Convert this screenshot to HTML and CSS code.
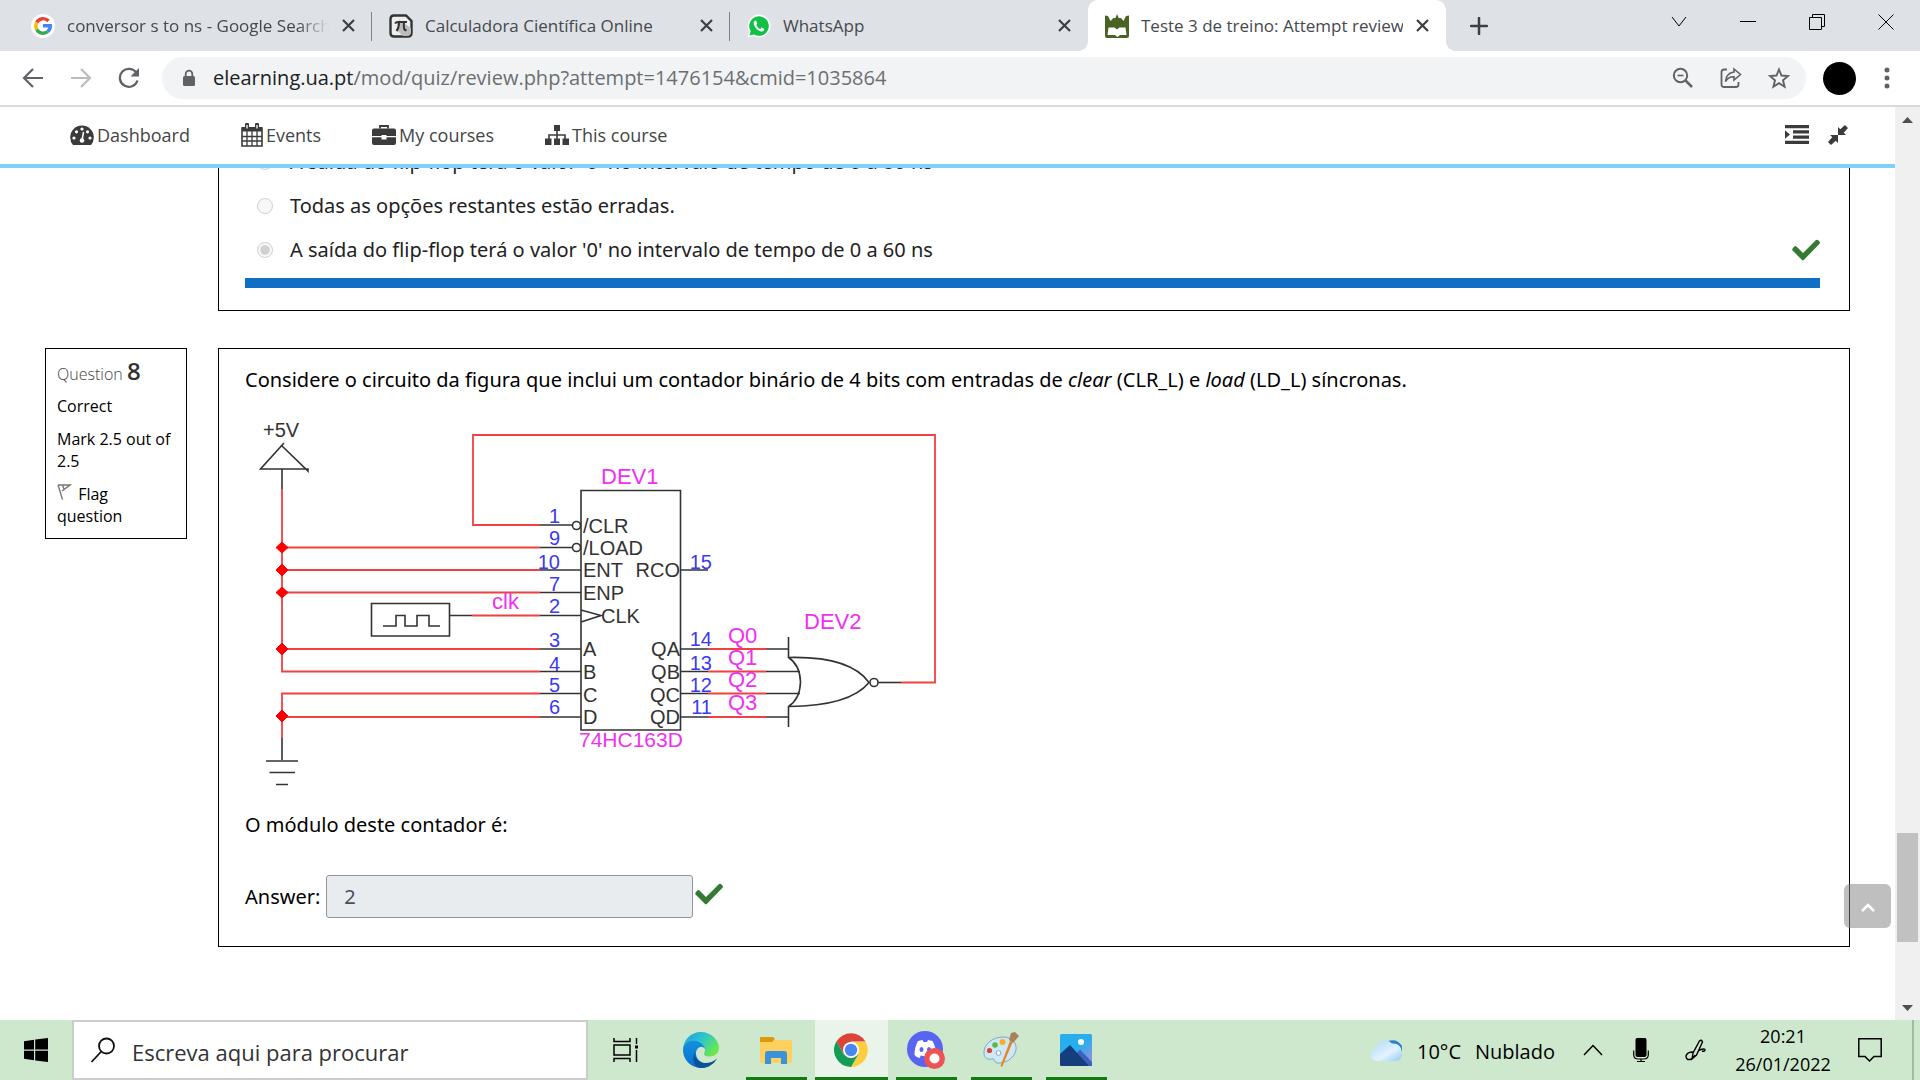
FILE: index.html
```html
<!DOCTYPE html>
<html lang="pt">
<head>
<meta charset="utf-8">
<title>Teste 3 de treino: Attempt review</title>
<link rel="stylesheet" href="styles.css">
</head>
<body>
<svg class="defs" width="0" height="0" aria-hidden="true">
  <symbol id="x" viewBox="0 0 13 13"><path d="M1 1L12 12M12 1L1 12" stroke="#3c4043" stroke-width="2.2" fill="none"/></symbol>
  <symbol id="check" viewBox="0 0 28 22"><path d="M4.500 7.500L11 14L23.500 1.500Q25 0 26.500 1.500L27.300 2.300Q28.500 3.700 27.300 5L12 20.800Q10.900 21.900 9.800 20.800L.8 11.800Q-.4 10.500.8 9.200L2.300 7.600Q3.400 6.500 4.500 7.500Z" fill="#357a32"/></symbol>
</svg>

<header class="tabs">
  <div class="tab">
    <svg class="fav" viewBox="0 0 24 24"><circle cx="12" cy="12" r="12" fill="#fff"/><g fill="none" stroke-width="3.400"><path d="M17.500 7A7.300 7.300 0 0 0 5.700 8.500" stroke="#ea4335"/><path d="M5.700 8.500A7.300 7.300 0 0 0 5.700 15.500" stroke="#fbbc05"/><path d="M5.700 15.500A7.300 7.300 0 0 0 16.800 17.500" stroke="#34a853"/><path d="M16.800 17.500Q19.500 15 19.300 11.800H12" stroke="#4285f4"/></g></svg>
    <span class="tab-title fade">conversor s to ns - Google Search</span>
    <button class="tab-close" aria-label="Close tab"><svg width="13" height="13"><use href="#x"/></svg></button>
  </div>
  <div class="tab">
    <svg class="fav" viewBox="0 0 24 24"><path d="M5 1.500H17L22.500 7V19Q22.500 22.500 19 22.500H5Q1.500 22.500 1.500 19V5Q1.500 1.500 5 1.500Z" fill="#eee" stroke="#333" stroke-width="2.400"/><path d="M10 6L22 14V18Q22 22 18 22H14L8 16Z" fill="#bbb"/><path d="M6 9.500Q7 8 9 8H18M10 8.500Q10 14 7.500 17M15 8.500Q14 17 17.500 16" stroke="#333" stroke-width="2" fill="none"/></svg>
    <span class="tab-title">Calculadora Científica Online</span>
    <button class="tab-close" aria-label="Close tab"><svg width="13" height="13"><use href="#x"/></svg></button>
  </div>
  <div class="tab">
    <svg class="fav" viewBox="0 0 24 24"><path d="M.5 23.500L2 17.500A11.500 11.500 0 1 1 6.500 22Z" fill="#fff"/><path d="M2.500 21.500L3.700 17.300A9.800 9.800 0 1 1 7 20.500Z" fill="#12c045"/><path d="M8 6.500Q6 8 7 11Q9 16 14 17.500Q17 18 17.500 15L14.700 13.500L13.300 15Q10.500 14 9.200 11L10.300 9.700L9.200 6.800Q8.800 6.200 8 6.500Z" fill="#fff"/></svg>
    <span class="tab-title">WhatsApp</span>
    <button class="tab-close" aria-label="Close tab"><svg width="13" height="13"><use href="#x"/></svg></button>
  </div>
  <div class="tab active">
    <svg class="fav" viewBox="0 0 24 24"><path d="M0 1.500L3 2L5.500 7L8.500 4L10.500 4L12 0L13.700 4L16 4L18.500 7L21 2L24 1.500V22Q24 24 22 24H2Q0 24 0 22Z" fill="#4a6322"/><path d="M3.500 13.500H9.500L12 15.500L14.500 13.500H20.500L21.500 21H15L12.500 23L10 21H2.500Z" fill="#fff"/></svg>
    <span class="tab-title">Teste 3 de treino: Attempt review</span>
    <button class="tab-close" aria-label="Close tab"><svg width="13" height="13"><use href="#x"/></svg></button>
  </div>
  <button class="new-tab" aria-label="New tab"><svg width="18" height="18" viewBox="0 0 18 18"><path d="M9 1V17M1 9H17" stroke="#3c4043" stroke-width="2.500" stroke-linecap="round"/></svg></button>
  <div class="window-buttons">
    <button aria-label="Search tabs"><svg width="16" height="16" viewBox="0 0 16 16"><path d="M1 3L8 12L15 3"/></svg></button>
    <button aria-label="Minimize"><svg width="16" height="16" viewBox="0 0 16 16"><path d="M0 7.500H16"/></svg></button>
    <button aria-label="Restore"><svg width="16" height="16" viewBox="0 0 16 16"><path d="M.5 3.500H12.500V15.500H.5ZM3.500 3.500V.5H15.500V12.500H12.500"/></svg></button>
    <button aria-label="Close"><svg width="16" height="16" viewBox="0 0 16 16"><path d="M.5.500L15.500 15.500M15.500.500L.5 15.500"/></svg></button>
  </div>
</header>

<div class="toolbar">
  <button aria-label="Back"><svg width="22" height="22" viewBox="0 0 22 22"><path d="M21 11H2.500M11 2L2 11L11 20" stroke="#5f6368" stroke-width="2.200" fill="none"/></svg></button>
  <button aria-label="Forward"><svg width="22" height="22" viewBox="0 0 22 22"><path d="M1 11H19.500M11 2L20 11L11 20" stroke="#babcbe" stroke-width="2.200" fill="none"/></svg></button>
  <button aria-label="Reload"><svg width="22" height="22" viewBox="0 0 22 22"><path d="M18.500 6A9 9 0 1 0 19.500 13.500" stroke="#5f6368" stroke-width="2.300" fill="none"/><path d="M21 1V9.500H12.500Z" fill="#5f6368"/></svg></button>
  <div class="omnibox">
    <svg width="14" height="18" viewBox="0 0 14 18"><rect x="1" y="7" width="12" height="10" rx="1.500" fill="#5f6368"/><path d="M3.700 8V5A3.300 3.300 0 0 1 10.300 5V8" stroke="#5f6368" stroke-width="1.800" fill="none"/></svg>
    <span class="url"><b>elearning.ua.pt</b>/mod/quiz/review.php?attempt=1476154&amp;cmid=1035864</span>
    <button aria-label="Zoom"><svg width="22" height="22" viewBox="0 0 22 22"><g stroke="#5f6368" fill="none"><circle cx="8.500" cy="8.500" r="6.700" stroke-width="2"/><path d="M13.500 13.500L20 20" stroke-width="2.500"/><path d="M5.500 8.500H11.500" stroke-width="1.600"/></g></svg></button>
    <button aria-label="Share"><svg width="22" height="22" viewBox="0 0 22 22"><path d="M7 2.500H4Q1.500 2.500 1.500 5V17.500Q1.500 20 4 20H16Q18.500 20 18.500 17.500V15" stroke="#5f6368" stroke-width="1.800" fill="none"/><path d="M14 2L20.500 7.500L14 13V9.800Q8.500 9.500 5.500 14.500Q6 6 14 5Z" stroke="#5f6368" stroke-width="1.600" fill="none"/></svg></button>
    <button aria-label="Bookmark"><svg width="22" height="22" viewBox="0 0 22 22"><path d="M11 2.500L13.500 8.500L20 9L15 13.300L16.600 19.700L11 16.200L5.400 19.700L7 13.300L2 9L8.500 8.500Z" stroke="#5f6368" stroke-width="1.900" fill="none"/></svg></button>
  </div>
  <button class="avatar" aria-label="Profile"></button>
  <button class="kebab" aria-label="Menu"><svg width="6" height="22" viewBox="0 0 6 22"><g fill="#5f6368"><circle cx="3" cy="3" r="2.500"/><circle cx="3" cy="11" r="2.500"/><circle cx="3" cy="19" r="2.500"/></g></svg></button>
</div>

<div class="view">
  <div class="page">
    <nav class="nav">
      <a href="#"><svg width="24" height="20" viewBox="0 0 24 20"><path d="M3 20A11.800 11.800 0 1 1 21 20Z" fill="#3b3b3b"/><g fill="#fff"><circle cx="4" cy="13" r="1.600"/><circle cx="6.500" cy="6.800" r="1.600"/><circle cx="12" cy="4" r="1.600"/><circle cx="17.500" cy="6.800" r="1.600"/><circle cx="20" cy="13" r="1.600"/><circle cx="12" cy="15.500" r="2.300"/></g><path d="M12 15.500L13.500 7" stroke="#fff" stroke-width="1.500"/></svg>Dashboard</a>
      <a href="#"><svg width="22" height="24" viewBox="0 0 22 24"><path d="M1 5H21V23H1Z" fill="#fff" stroke="#3b3b3b" stroke-width="1.600"/><path d="M1 4H21V8.500H1Z" fill="#3b3b3b"/><path d="M6 8V23M11 8V23M16 8V23M1 13.500H21M1 18H21" stroke="#3b3b3b" stroke-width="1.300"/><path d="M6 1.500V6M16 1.500V6" stroke="#3b3b3b" stroke-width="4" stroke-linecap="round"/><path d="M6 2V5.500M16 2V5.500" stroke="#fff" stroke-width="1.300"/></svg>Events</a>
      <a href="#"><svg width="24" height="20" viewBox="0 0 24 20"><path d="M8 3.500V1H16V3.500" stroke="#3b3b3b" stroke-width="1.800" fill="none"/><path d="M2 3.500H22Q24 3.500 24 5.500V11H14.500V10H9.500V11H0V5.500Q0 3.500 2 3.500ZM0 12.300H9.500V14.500H14.500V12.300H24V18Q24 20 22 20H2Q0 20 0 18Z" fill="#3b3b3b"/></svg>My courses</a>
      <a href="#"><svg width="24" height="20" viewBox="0 0 24 20"><path d="M9 0H15V6H12.800V9.200H20.800V13.500H24V20H17.500V13.500H19.200V10.800H12.800V13.500H15V20H9V13.500H11.200V10.800H4.800V13.500H6.500V20H0V13.500H3.200V9.200H11.200V6H9Z" fill="#3b3b3b"/></svg>This course</a>
      <span class="nav-tools">
        <button aria-label="Toggle blocks"><svg width="24" height="20" viewBox="0 0 24 20"><path d="M0 0H24V3.300H0ZM8 5.300H24V8.600H8ZM8 10.500H24V13.800H8ZM0 15.700H24V19H0ZM0 5.300L5 9.500L0 13.800Z" fill="#3b3b3b"/></svg></button>
        <button aria-label="Exit full width"><svg width="20" height="20" viewBox="0 0 20 20"><path d="M10 2L12.300 4.300L17 0L20 3L15.700 7.700L18 10H10ZM10 10V18L7.700 15.700L3 20L0 17L4.300 12.300L2 10Z" fill="#3b3b3b"/></svg></button>
      </span>
    </nav>
    <main class="content">
      <section class="question previous">
        <div class="box">
          <label class="option"><input type="radio" name="q7" disabled>A saída do flip-flop terá o valor '0' no intervalo de tempo de 0 a 80 ns</label>
          <label class="option"><input type="radio" name="q7" disabled>Todas as opções restantes estão erradas.</label>
          <label class="option"><input type="radio" name="q7" disabled checked>A saída do flip-flop terá o valor '0' no intervalo de tempo de 0 a 60 ns<svg class="mark" width="28" height="22"><use href="#check"/></svg></label>
          <div class="bar"></div>
        </div>
      </section>
      <section class="question">
        <aside class="info">
          <h3>Question <b>8</b></h3>
          <p>Correct</p>
          <p>Mark 2.5 out of 2.5</p>
          <a href="#"><svg width="15" height="16" viewBox="0 0 15 16"><path d="M1 1L5.500 15.500M1 1H13L5 7M5.500 1L7 5" stroke="#777" stroke-width="1.400" fill="none"/></svg> Flag question</a>
        </aside>
        <div class="box">
          <p>Considere o circuito da figura que inclui um contador binário de 4 bits com entradas de <i>clear</i> (CLR_L) e <i>load</i> (LD_L) síncronas.</p>
          <svg class="circuit" width="700" height="400" viewBox="245 400 700 400" role="img" aria-label="Circuito">
            <g fill="none" stroke="#f04040" stroke-width="1.800">
              <path d="M282 489V671.500H540M282 547.500H540M282 570H540M282 592.500H540M282 649H540M540 693.500H282V738M282 717H540M540 525H473V435H935V682.500H901M472 615.500H540M708 649H766M708 671.500H766M708 693.500H766M708 717H766"/>
            </g>
            <g fill="none" stroke="#333" stroke-width="1.600">
              <path d="M284 443L260.500 469H308L308 471L281 445M282 469V489M282 738V760M266 761H298M269.500 772.500H295M276 784.500H288"/>
              <path d="M371.500 603.500H449.500V636H371.500ZM383 626H396V615.500H405V626H417V615.500H429V626H440M449.500 615.500H472"/>
              <path d="M540 525H572M540 547.500H572M540 570H581M540 592.500H581M540 615.500H581M540 649H581M540 671.500H581M540 693.500H581M540 717H581"/>
              <circle cx="576.500" cy="525.500" r="4"/><circle cx="576.500" cy="547.500" r="4"/>
              <path d="M581 490.500H680.500V730H581ZM581 610L601 615.500L581 622"/>
              <path d="M680.500 570H708M680.500 649H708M680.500 671.500H708M680.500 693.500H708M680.500 717H708M766 649H788.500M766 671.500H800M766 693.500H800M766 717H788.500M788.500 637V658M788.500 706V727"/>
              <path d="M788.500 657.500Q800 665 800.500 682Q800 699 788.500 706.500M788.500 657.500Q850 656 869 682.500Q850 706 788.500 706.500"/>
              <circle cx="874" cy="682.500" r="4"/><path d="M878 682.500H901"/>
            </g>
            <g fill="#f00"><path d="M282 542L288 547.500L282 553L276 547.500ZM282 564L288 570L282 576L276 570ZM282 587L288 592.500L282 598L276 592.500ZM282 643L288 649L282 655L276 649ZM282 710L288 716L282 722L276 716Z" stroke="#f00"/></g>
            <g class="part"><text x="263" y="437">+5V</text><text x="583" y="533">/CLR</text><text x="583" y="555">/LOAD</text><text x="583" y="577">ENT</text><text x="583" y="600">ENP</text><text x="601" y="623">CLK</text><text x="583" y="656">A</text><text x="583" y="679">B</text><text x="583" y="702">C</text><text x="583" y="724">D</text></g>
            <g class="part end"><text x="680" y="577">RCO</text><text x="680" y="656">QA</text><text x="680" y="679">QB</text><text x="680" y="702">QC</text><text x="680" y="724">QD</text></g>
            <g class="pin end"><text x="560" y="523">1</text><text x="560" y="545">9</text><text x="560" y="569">10</text><text x="560" y="591">7</text><text x="560" y="613">2</text><text x="560" y="647">3</text><text x="560" y="671">4</text><text x="560" y="692">5</text><text x="560" y="714">6</text><text x="712" y="569">15</text><text x="712" y="646">14</text><text x="712" y="670">13</text><text x="712" y="692">12</text><text x="712" y="714">11</text></g>
            <g class="net"><text x="492" y="609">clk</text><text x="601" y="484">DEV1</text><text x="804" y="629">DEV2</text><text class="model" x="579" y="747">74HC163D</text><text x="728" y="643">Q0</text><text x="728" y="665">Q1</text><text x="728" y="687">Q2</text><text x="728" y="710">Q3</text></g>
          </svg>
          <p class="ask">O módulo deste contador é:</p>
          <div class="answer"><label for="answer">Answer:</label><input id="answer" type="text" value="2" readonly><svg width="28" height="22"><use href="#check"/></svg></div>
        </div>
      </section>
      <button class="to-top" aria-label="Back to top"><svg width="14" height="9" viewBox="0 0 14 9"><path d="M1 8L7 2L13 8" stroke="#fff" stroke-width="2.500" fill="none"/></svg></button>
    </main>
  </div>
  <div class="scrollbar">
    <svg width="11" height="6" viewBox="0 0 11 6"><path d="M0 6L5.500 0L11 6Z" fill="#505050"/></svg>
    <div class="track"><div class="thumb"></div></div>
    <svg width="11" height="6" viewBox="0 0 11 6"><path d="M0 0L5.500 6L11 0Z" fill="#505050"/></svg>
  </div>
</div>

<footer class="taskbar">
  <button class="start" aria-label="Start"><svg width="24" height="24" viewBox="0 0 24 24"><path d="M0 3.300L10 1.800V11.500H0ZM11.200 1.600L24 0V11.500H11.200ZM0 12.700H10V22.300L0 20.800ZM11.200 12.700H24V24L11.200 22.500Z"/></svg></button>
  <label class="search"><svg width="26" height="26" viewBox="0 0 26 26"><circle cx="16.500" cy="9" r="7.500" fill="none" stroke="#111" stroke-width="1.800"/><path d="M11.300 14.500L1.500 25" stroke="#111" stroke-width="1.800"/></svg><input type="text" placeholder="Escreva aqui para procurar" aria-label="Search"></label>
  <div class="apps">
    <button aria-label="Task view"><svg width="26" height="24" viewBox="0 0 26 24"><path d="M1 0V3.500H17V0M1 7H17V17H1ZM1 24V20.500H17V24M23.500 0V6M23.500 12V24" stroke="#000" stroke-width="1.500" fill="none"/><path d="M22 7.500H25V10.500H22Z"/></svg></button>
    <button aria-label="Edge"><svg width="36" height="36" viewBox="0 0 36 36"><defs><linearGradient id="e1" x1="0" y1="0" x2="1" y2=".6"><stop offset="0" stop-color="#1b9de2"/><stop offset=".5" stop-color="#2cc3d0"/><stop offset="1" stop-color="#6be84c"/></linearGradient><linearGradient id="e2" x1="0" y1="0" x2="0" y2="1"><stop offset="0" stop-color="#1490dc"/><stop offset="1" stop-color="#0a6fd0"/></linearGradient></defs><path d="M0 18C0 8 8 0 18 0S36 8 36 16C36 22 31 24.500 26 24.500C22 24.500 20 22.500 21.500 20.500C23.500 17 20 13 15 12Q4 9 0 18Z" fill="url(#e1)"/><path d="M0 18C1 10 9 7 16 10Q21 12.500 22 17C19 12.500 14 15 13 20C12 28 20 32 27 33.500A18 18 0 0 1 0 18Z" fill="url(#e2)"/><path d="M13 19C10 25 15 31 22 31Q29 31 34 26.500C30 34 21 38 14 35Q7 28 13 19Z" fill="#0f4f96"/></svg></button>
    <button class="open" aria-label="Explorer"><svg width="32" height="28" viewBox="0 0 32 28"><path d="M0 2Q0 1 1 1H13L15 4H31Q32 4 32 5V25Q32 27 30 27H2Q0 27 0 25Z" fill="#fdd060"/><path d="M0 5V2Q0 1 1 1H13L15 3L12 6H0Z" fill="#dd9b0c"/><path d="M5 28V18Q5 15 8 15H24Q27 15 27 18V28H21V22H11V28Z" fill="#3a93da"/></svg></button>
    <button class="open current" aria-label="Chrome"><svg width="34" height="34" viewBox="0 0 34 34"><path d="M2.500 8.500A17 17 0 0 1 31.500 8.500H17L9.700 21Z" fill="#db4437"/><path d="M31.800 9A17 17 0 0 1 17 34L24.300 21.200L17 9Z" fill="#ffcd40"/><path d="M2.500 8.300A17 17 0 0 0 17 34L24.300 21.200H9.700Z" fill="#149c57"/><circle cx="17" cy="17" r="8" fill="#fff"/><circle cx="17" cy="17" r="6.200" fill="#4a86f0"/></svg></button>
    <button class="open" aria-label="Discord"><svg class="wide" width="38" height="38" viewBox="0 0 38 38"><circle cx="18" cy="18" r="18" fill="#5865f2"/><path d="M11 10L15.500 9L16.500 11H20L21 9L25.500 10Q29 16 29 24Q27 26.500 24 27L22.500 24.500Q18 26 14 24.500L12.500 27Q9.500 26.500 7.500 24Q7.500 16 11 10Z" fill="#fff"/><ellipse cx="14.500" cy="18.500" rx="2" ry="2.500" fill="#5865f2"/><ellipse cx="22" cy="18.500" rx="2" ry="2.500" fill="#5865f2"/><circle cx="27.500" cy="27.500" r="10.500" fill="#ee5253"/><circle cx="27.500" cy="27.500" r="5" fill="#fff"/></svg></button>
    <button class="open" aria-label="Paint"><svg width="36" height="36" viewBox="0 0 36 36"><path d="M1 22C0 12 10 5 20 5C29 5 34 11 33 18C31 27 22 31 16 31C10 32 13 26 9 27C5 28 1.500 26 1 22Z" fill="#cfe8f6" stroke="#7ba9c6"/><circle cx="6.500" cy="18.500" r="2.600" fill="#e04030"/><circle cx="12" cy="13" r="2.800" fill="#59b948"/><circle cx="19.500" cy="10" r="3" fill="#fbb01e"/><circle cx="15.500" cy="21" r="2.400" fill="#fff" stroke="#7ba9c6"/><path d="M27 9L29.500 10.500L19 35L17.500 34Z" fill="#e58222"/><path d="M26 8L28 1L32 0L36 4L30 11Z" fill="#a9805a"/></svg></button>
    <button class="open" aria-label="Photos"><svg width="32" height="32" viewBox="0 0 32 32"><defs><linearGradient id="p1" x1="0" y1="0" x2="1" y2="1"><stop offset=".5" stop-color="#27aeec"/><stop offset="1" stop-color="#a98bdc"/></linearGradient></defs><rect width="32" height="32" rx="1.500" fill="url(#p1)"/><path d="M14 22L20 15.500L32 28V32H14Z" fill="#3d62be"/><path d="M0 20L10 11L29 32H1.500Q0 32 0 30.500Z" fill="#153f7c"/><circle cx="21" cy="8" r="3" fill="#fff"/></svg></button>
  </div>
  <div class="tray">
    <button class="weather"><svg width="32" height="24" viewBox="0 0 32 24"><defs><linearGradient id="c1" x1="0" y1="0" x2="1" y2="1"><stop offset="0" stop-color="#aed8fb"/><stop offset=".6" stop-color="#e3f3ff"/><stop offset="1" stop-color="#8fc6f5"/></linearGradient></defs><path d="M17 3Q26 0 31 8V14H20Z" fill="#2f80cc"/><path d="M7 23A6.500 6.500 0 0 1 5.500 10A9 9 0 0 1 21 5.500Q30 5 31 14Q31.500 23 24 23Z" fill="url(#c1)"/></svg><span>10°C</span><span>Nublado</span></button>
    <button class="chevron" aria-label="Hidden icons"><svg width="20" height="12" viewBox="0 0 20 12"><path d="M1 11L10 1.500L19 11" stroke="#000" stroke-width="1.500" fill="none"/></svg></button>
    <button class="mic" aria-label="Microphone"><svg width="16" height="24" viewBox="0 0 16 24"><path d="M4 0H12Q13.500 0 13.500 2V17Q13.500 19 11.500 19H4.500Q2.500 19 2.500 17V2Q2.500 0 4 0Z"/><path d="M.7 12.500V17Q1 21 5 21H11Q15 21 15.300 17V12.500M8 21V23.500M4 23.500H12" stroke="#000" stroke-width="1.200" fill="none"/></svg></button>
    <button class="pen" aria-label="Pen"><svg width="21" height="22" viewBox="0 0 21 22"><path d="M7 20L8 14L14.500 2Q16.500 0 17.500 3L11.500 16ZM8 13Q2 13 1 17Q1 21 5 20.500Q8 20 10 16M13 12Q18 9 20 10.500Q20 13 17 12" stroke="#000" stroke-width="1.400" fill="none"/></svg></button>
    <button class="clock"><span>20:21</span><span>26/01/2022</span></button>
    <button class="notes" aria-label="Notifications"><svg width="24" height="24" viewBox="0 0 24 24"><path d="M.8.800H23.200V18.500H16L11.500 23L7 18.500H.8Z" stroke="#000" stroke-width="1.500" fill="none"/></svg></button>
    <span class="desktop"></span>
  </div>
</footer>
</body>
</html>
```
FILE: styles.css
```css
* { box-sizing: border-box; }
body {
  margin: 0;
  height: 100vh;
  display: flex;
  flex-direction: column;
  overflow: hidden;
  background: #fff;
  color: #000;
  font-family: "Open Sans", "Noto Sans", sans-serif;
  font-size: 20px;
  line-height: 30px;
}
button {
  border: 0;
  padding: 0;
  background: none;
  font: inherit;
  color: inherit;
  display: flex;
  align-items: center;
  justify-content: center;
}
svg { display: block; flex: none; }
.defs { position: absolute; }
p, h3 { margin: 0; }
a { color: inherit; text-decoration: none; }

/* Tab strip */
.tabs {
  display: flex;
  height: 51px;
  padding-left: 14px;
  background: #dee1e6;
  flex: none;
}
.tab {
  flex: 0 1 358px;
  min-width: 0;
  display: flex;
  align-items: center;
  padding: 0 17px;
  position: relative;
  font-size: 17px;
  color: #45494d;
}
.tab:nth-child(-n+2)::after {
  content: "";
  position: absolute;
  right: 0;
  top: 12px;
  height: 29px;
  width: 1px;
  background: #808387;
}
.tab.active { background: #fff; border-radius: 10px 10px 0 0; }
.tab.active::before, .tab.active::after {
  content: "";
  position: absolute;
  bottom: 0;
  width: 10px;
  height: 10px;
}
.tab.active::before { left: -10px; background: radial-gradient(circle at 0 0, #dee1e6 10px, #fff 10px); }
.tab.active::after { right: -10px; background: radial-gradient(circle at 100% 0, #dee1e6 10px, #fff 10px); }
.fav { width: 24px; height: 24px; }
.tab-title {
  flex: 1;
  margin: 0 13px 0 12px;
  white-space: nowrap;
  overflow: hidden;
}
.fade { mask-image: linear-gradient(to right, #000 88%, transparent); }
.new-tab { width: 66px; }
.window-buttons { margin-left: auto; display: flex; }
.window-buttons button { width: 69px; height: 44px; }
.window-buttons path { stroke: #000; fill: none; }

/* Address bar */
.toolbar {
  display: flex;
  align-items: center;
  height: 56px;
  padding: 0 24px 0 9px;
  border-bottom: 2px solid #d9dadc;
  flex: none;
}
.toolbar > button { width: 48px; height: 42px; }
.omnibox {
  flex: 1;
  display: flex;
  align-items: center;
  height: 42px;
  margin-left: 9px;
  padding: 0 16px 0 20px;
  border-radius: 21px;
  background: #f1f3f4;
}
.omnibox button { margin-left: 26px; }
.url { flex: 1; margin-left: 17px; color: #6b6f73; white-space: nowrap; }
.url b { font-weight: 400; color: #202124; }
.toolbar > .avatar { width: 33px; height: 33px; margin-left: 17px; border-radius: 50%; background: #000; }
.toolbar > .kebab { width: 6px; margin: 0 6px 0 28px; }

/* Page */
.view { flex: 1; min-height: 0; display: flex; }
.page { flex: 1; min-width: 0; display: flex; flex-direction: column; }
.nav {
  display: flex;
  align-items: center;
  gap: 51px;
  height: 61px;
  padding: 0 47px 2px 70px;
  border-bottom: 4px solid #7fd0ff;
  font-size: 18px;
  color: #454545;
  flex: none;
}
.nav a { display: flex; align-items: center; gap: 3px; }
.nav-tools { margin-left: auto; display: flex; gap: 19px; }
.content {
  flex: 1;
  min-height: 0;
  overflow: hidden;
  position: relative;
  padding: 0 45px;
}
.question { display: flex; align-items: flex-start; gap: 31px; margin-bottom: 37px; }
.question .box {
  flex: 1;
  border: 1px solid #000;
  padding: 16px 29px 28px 26px;
  font-family: "Noto Sans", "Open Sans", sans-serif;
}
.question.previous { margin-top: -49px; padding-left: 173px; }
.previous .box { padding-top: 20px; padding-bottom: 22px; }
.option { display: flex; align-items: center; height: 44px; color: #222; }
.option input { width: 16px; height: 16px; margin: 0 17px 0 12px; }
.mark { margin-left: auto; }
.bar { height: 10px; margin-top: 6px; background: #0f6fc5; }
.info {
  flex: none;
  width: 142px;
  height: 191px;
  border: 1px solid #000;
  padding: 6px 11px;
  font-size: 16px;
  line-height: 22px;
}
.info h3 { font-size: 16px; font-weight: 300; line-height: 32px; color: #444; }
.info h3 b { font-size: 24px; font-weight: 600; color: #333; }
.info p { margin: 5px 0 11px; }
.info svg { display: inline-block; margin-right: 2px; }
.circuit { margin-top: 5px; }
.circuit text { font-family: "Liberation Sans", Arial, sans-serif; font-size: 20px; }
.circuit .part { fill: #333; }
.circuit .pin { fill: #3a3af0; }
.circuit .net text { fill: #f030f0; font-size: 22px; }
.circuit .net .model { font-size: 21px; }
.circuit .end { text-anchor: end; }
.ask { margin-top: 10px; }
.answer { display: flex; align-items: center; margin-top: 35px; }
.answer input {
  width: 367px;
  height: 43px;
  margin: 0 2px 0 6px;
  padding: 0 17px;
  border: 1px solid #8f959e;
  border-radius: 3px;
  background: #e9ecef;
  color: #495057;
  font: inherit;
}
.answer svg { margin-bottom: 6px; }
.to-top {
  position: absolute;
  right: 4px;
  bottom: 92px;
  width: 47px;
  height: 44px;
  padding-top: 3px;
  border-radius: 6px;
  background: rgba(128, 128, 128, 0.5);
}
.scrollbar {
  width: 25px;
  background: #f0f0f0;
  display: flex;
  flex-direction: column;
  align-items: center;
  padding: 10px 0 9px;
}
.track { flex: 1; width: 21px; display: flex; flex-direction: column; }
.track::before { content: ""; flex: 710; }
.track::after { content: ""; flex: 63; }
.thumb { flex: 109; background: #c1c1c1; }

/* Taskbar */
.taskbar { display: flex; height: 60px; background: #cde8cd; flex: none; }
.start { width: 72px; }
.search {
  width: 516px;
  display: flex;
  align-items: center;
  gap: 16px;
  padding: 0 16px;
  border: 2px solid #ccc;
  background: #fff;
}
.search input { flex: 1; min-width: 0; border: 0; padding: 3px 0 0; font: inherit; font-size: 22px; background: none; }
.search input::placeholder { color: #333; opacity: 1; }
.apps { display: flex; gap: 2px; padding-left: 2px; }
.apps button { width: 73px; border-bottom: 3px solid transparent; padding: 3px 2px 0 0; }
.apps .open { background: linear-gradient(#107c10, #107c10) bottom / 61px 3px no-repeat border-box; }
.apps .current { background: linear-gradient(#107c10, #107c10) bottom / 73px 3px no-repeat border-box, #eaf4ea; }
.tray { margin-left: auto; display: flex; align-items: center; }
.weather { gap: 14px; }
.weather span { padding-top: 4px; }
.chevron { margin-left: 28px; }
.mic { margin-left: 30px; }
.pen { margin-left: 36px; }
.clock { flex-direction: column; margin-left: 28px; font-size: 18px; line-height: 28px; width: 98px; }
.notes { margin: 0 30px 0 26px; }
.desktop { width: 2px; height: 60px; margin-right: 6px; background: #a3b9a3; }
```
